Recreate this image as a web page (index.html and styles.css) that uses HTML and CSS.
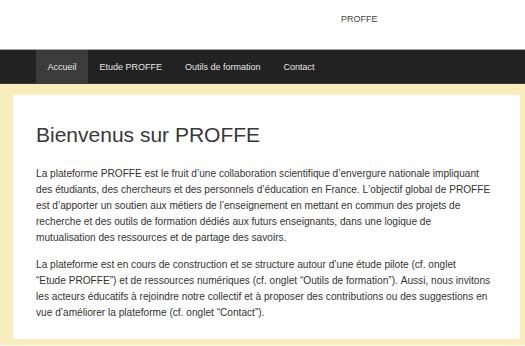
FILE: index.html
```html
<!DOCTYPE html>
<html lang="fr">
<head>
<meta charset="utf-8">
<title>PROFFE</title>
<link rel="stylesheet" href="styles.css">
</head>
<body>
<header class="site-header">
  <div class="brand">PROFFE</div>
</header>
<nav class="main-nav">
  <a class="nav-item active" href="#">Accueil</a>
  <a class="nav-item" href="#">Etude PROFFE</a>
  <a class="nav-item" href="#">Outils de formation</a>
  <a class="nav-item" href="#">Contact</a>
</nav>
<main class="page">
  <section class="card">
    <h1 class="title">Bienvenus sur PROFFE</h1>
    <p class="text">La plateforme PROFFE est le fruit d’une collaboration scientifique d’envergure nationale impliquant des étudiants, des chercheurs et des personnels d’éducation en France. L’objectif global de PROFFE est d’apporter un soutien aux métiers de l’enseignement en mettant en commun des projets de recherche et des outils de formation dédiés aux futurs enseignants, dans une logique de mutualisation&nbsp;des ressources et de partage des savoirs.</p>
    <p class="text">La plateforme est en cours de construction et se structure autour d’une étude pilote (cf. onglet “Etude&nbsp;PROFFE”) et de ressources numériques (cf. onglet “Outils de formation”). Aussi, nous invitons les acteurs éducatifs à rejoindre notre collectif et à proposer des contributions ou des suggestions en vue d’améliorer la plateforme (cf. onglet “Contact”).</p>
  </section>
</main>
</body>
</html>
```

FILE: styles.css
```css
html, body {
  margin: 0;
  padding: 0;
  background: #ffffff;
  font-family: "Liberation Sans", Arial, sans-serif;
}

.site-header {
  height: 49px;
  box-sizing: border-box;
  padding: 14px 0 0 341px;
}

.brand {
  font-size: 9px;
  line-height: 11px;
  color: #444;
}

.main-nav {
  display: flex;
  height: 33px;
  padding-left: 36px;
  background: #222222;
  border-top: 1px solid #a8a8a8;
  border-bottom: 1px solid #3a3a3a;
}

.nav-item {
  display: flex;
  align-items: center;
  padding: 0 11.5px;
  font-size: 9px;
  color: #e6e6e6;
  text-decoration: none;
}

.nav-item.active {
  background: #3b3b3b;
}

.page {
  background: #f9eebb;
  padding: 11px 5px 6px 13px;
}

.card {
  background: #ffffff;
  padding: 27.5px 0 10px 23px;
  height: 244px;
  box-sizing: border-box;
}

.title {
  margin: 0 0 20.4px;
  font-size: 21px;
  line-height: 23.1px;
  font-weight: 300;
  color: #383838;
}

.text {
  width: 458.4px;
  margin: 0 0 11px;
  font-size: 10.15px;
  line-height: 16px;
  font-kerning: none;
  color: #333;
}
```
